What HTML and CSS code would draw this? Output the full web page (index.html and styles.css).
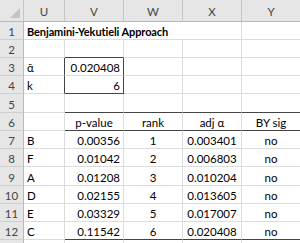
FILE: index.html
```html
<!DOCTYPE html>
<html>
<head>
<meta charset="utf-8">
<link rel="stylesheet" href="styles.css">
</head>
<body>
<div class="sheet">
  <div class="corner"><svg width="10" height="10" viewBox="0 0 10 10"><polygon points="10,0 10,10 0,10" fill="#c4c4c4"/></svg></div>
  <div class="ch">U</div><div class="ch">V</div><div class="ch">W</div><div class="ch">X</div><div class="ch ylast">Y</div>

  <div class="rh">1</div><div class="c title">Benjamini-Yekutieli Approach</div><div class="c"></div>

  <div class="rh">2</div><div class="c"></div><div class="c bb"></div><div class="c"></div><div class="c"></div><div class="c"></div>

  <div class="rh">3</div><div class="c br">ᾶ</div><div class="c br r">0.020408</div><div class="c"></div><div class="c"></div><div class="c"></div>

  <div class="rh">4</div><div class="c br">k</div><div class="c br bb r">6</div><div class="c"></div><div class="c"></div><div class="c"></div>

  <div class="rh">5</div><div class="c"></div><div class="c bb"></div><div class="c bb"></div><div class="c bb"></div><div class="c bb"></div>

  <div class="rh">6</div><div class="c"></div><div class="c bb m">p-value</div><div class="c bb m">rank</div><div class="c bb m">adj α</div><div class="c bb m">BY sig</div>

  <div class="rh">7</div><div class="c">B</div><div class="c r">0.00356</div><div class="c m">1</div><div class="c m">0.003401</div><div class="c m">no</div>
  <div class="rh">8</div><div class="c">F</div><div class="c r">0.01042</div><div class="c m">2</div><div class="c m">0.006803</div><div class="c m">no</div>
  <div class="rh">9</div><div class="c">A</div><div class="c r">0.01208</div><div class="c m">3</div><div class="c m">0.010204</div><div class="c m">no</div>
  <div class="rh">10</div><div class="c">D</div><div class="c r">0.02155</div><div class="c m">4</div><div class="c m">0.013605</div><div class="c m">no</div>
  <div class="rh">11</div><div class="c">E</div><div class="c r">0.03329</div><div class="c m">5</div><div class="c m">0.017007</div><div class="c m">no</div>
  <div class="rh">12</div><div class="c">C</div><div class="c bb r">0.11542</div><div class="c bb m">6</div><div class="c bb m">0.020408</div><div class="c bb m">no</div>

  <div class="rh"></div><div class="c"></div><div class="c"></div><div class="c"></div><div class="c"></div><div class="c"></div>
</div>
</body>
</html>
```

FILE: styles.css
```css
html, body {
  margin: 0;
  padding: 0;
  background: #ffffff;
  overflow: hidden;
}
.sheet {
  display: grid;
  grid-template-columns: 24px 41px 59px 59px 59px 59px;
  grid-template-rows: 22px 18px 18px 18px 18px 19px 18px 18px 18px 19px 18px 18px 18px 18px;
  width: 301px;
  font-family: Lato, "Liberation Sans", sans-serif;
  font-size: 11.5px;
  color: #000;
}
.sheet > div {
  box-sizing: border-box;
  display: flex;
  align-items: center;
  white-space: nowrap;
  overflow: hidden;
}
.corner {
  background: #e6e6e6;
  border-right: 1px solid #c6c6c6;
  border-bottom: 1px solid #b8b8b8;
  justify-content: flex-end;
  align-items: flex-end !important;
  padding: 0 3px 3px 0;
}
.corner svg { display: block; }
.ch {
  background: #e6e6e6;
  border-right: 1px solid #c6c6c6;
  border-bottom: 1px solid #b8b8b8;
  justify-content: center;
  color: #444;
  padding-top: 1px;
}
.rh {
  background: #e6e6e6;
  border-right: 1px solid #b8b8b8;
  border-bottom: 1px solid #cfcfcf;
  justify-content: center;
  color: #444;
  padding-top: 2px;
}
.c {
  border-right: 1px solid #dcdcdc;
  border-bottom: 1px solid #dcdcdc;
  padding: 2px 3px 0 3px;
}
.title {
  grid-column: span 4;
  font-weight: bold;
  font-size: 11px;
  letter-spacing: -0.1px;
}
.r { justify-content: flex-end; }
.m { justify-content: center; }
.br { border-right-color: #444 !important; }
.bb { border-bottom-color: #444 !important; }
```
